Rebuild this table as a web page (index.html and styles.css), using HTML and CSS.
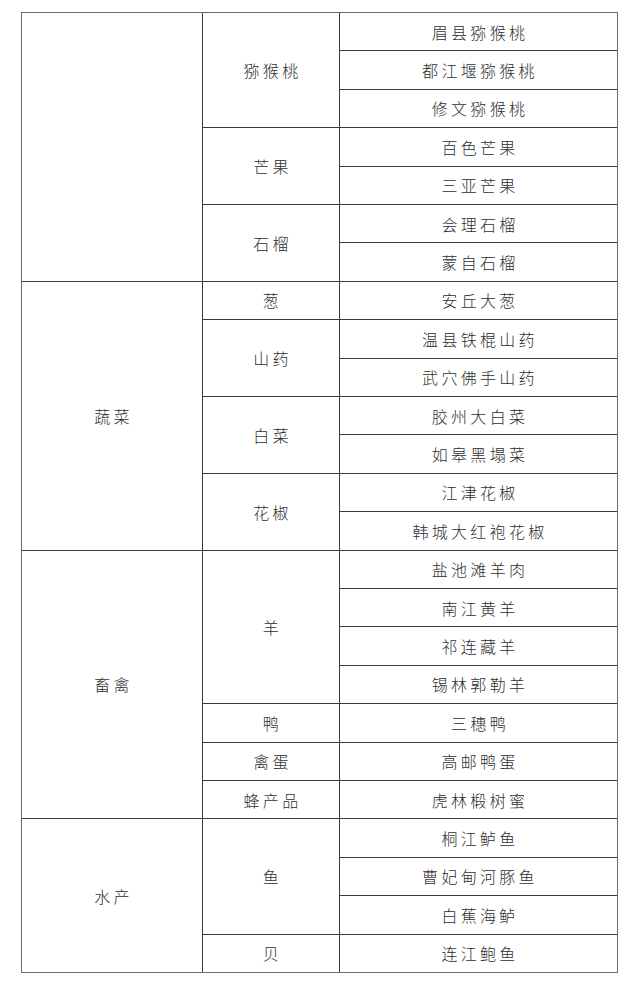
FILE: index.html
```html
<!DOCTYPE html>
<html lang="zh-CN">
<head>
<meta charset="utf-8">
<title>地理标志产品</title>
<link rel="stylesheet" href="styles.css">
</head>
<body>
<div class="grid">
  <div class="c c1 s7"></div>
  <div class="c c2 s3">猕猴桃</div>
  <div class="c c3">眉县猕猴桃</div>
  <div class="c c3">都江堰猕猴桃</div>
  <div class="c c3">修文猕猴桃</div>
  <div class="c c2 s2">芒果</div>
  <div class="c c3">百色芒果</div>
  <div class="c c3">三亚芒果</div>
  <div class="c c2 s2">石榴</div>
  <div class="c c3">会理石榴</div>
  <div class="c c3">蒙自石榴</div>

  <div class="c c1 s7">蔬菜</div>
  <div class="c c2">葱</div>
  <div class="c c3">安丘大葱</div>
  <div class="c c2 s2">山药</div>
  <div class="c c3">温县铁棍山药</div>
  <div class="c c3">武穴佛手山药</div>
  <div class="c c2 s2">白菜</div>
  <div class="c c3">胶州大白菜</div>
  <div class="c c3">如皋黑塌菜</div>
  <div class="c c2 s2">花椒</div>
  <div class="c c3">江津花椒</div>
  <div class="c c3">韩城大红袍花椒</div>

  <div class="c c1 s7">畜禽</div>
  <div class="c c2 s4">羊</div>
  <div class="c c3">盐池滩羊肉</div>
  <div class="c c3">南江黄羊</div>
  <div class="c c3">祁连藏羊</div>
  <div class="c c3">锡林郭勒羊</div>
  <div class="c c2">鸭</div>
  <div class="c c3">三穗鸭</div>
  <div class="c c2">禽蛋</div>
  <div class="c c3">高邮鸭蛋</div>
  <div class="c c2">蜂产品</div>
  <div class="c c3">虎林椴树蜜</div>

  <div class="c c1 s4">水产</div>
  <div class="c c2 s3">鱼</div>
  <div class="c c3">桐江鲈鱼</div>
  <div class="c c3">曹妃甸河豚鱼</div>
  <div class="c c3">白蕉海鲈</div>
  <div class="c c2">贝</div>
  <div class="c c3">连江鲍鱼</div>
</div>
</body>
</html>
```
FILE: styles.css
```css
html, body {
  margin: 0;
  background: #fff;
}
body {
  padding: 12px 0 0 21px;
  font-family: "Noto Sans CJK SC", "Noto Sans", sans-serif;
}
.grid {
  box-sizing: border-box;
  width: 597px;
  height: 961px;
  display: grid;
  grid-template-columns: 180px 136px 277px;
  grid-template-rows: repeat(25, 1fr);
  gap: 1px;
  background: #3a3a3a;
  border: 1px solid #6a6a6a;
}
.c {
  background: #fff;
  display: flex;
  align-items: center;
  justify-content: center;
  font-size: 16px;
  font-weight: 300;
  letter-spacing: 3.3px;
  padding-left: 3px;
  color: #2e2e2e;
  line-height: 1;
}
.c1 { grid-column: 1; }
.c2 { grid-column: 2; }
.c3 { grid-column: 3; }
.s2 { grid-row: span 2; }
.s3 { grid-row: span 3; }
.s4 { grid-row: span 4; }
.s7 { grid-row: span 7; }
```
